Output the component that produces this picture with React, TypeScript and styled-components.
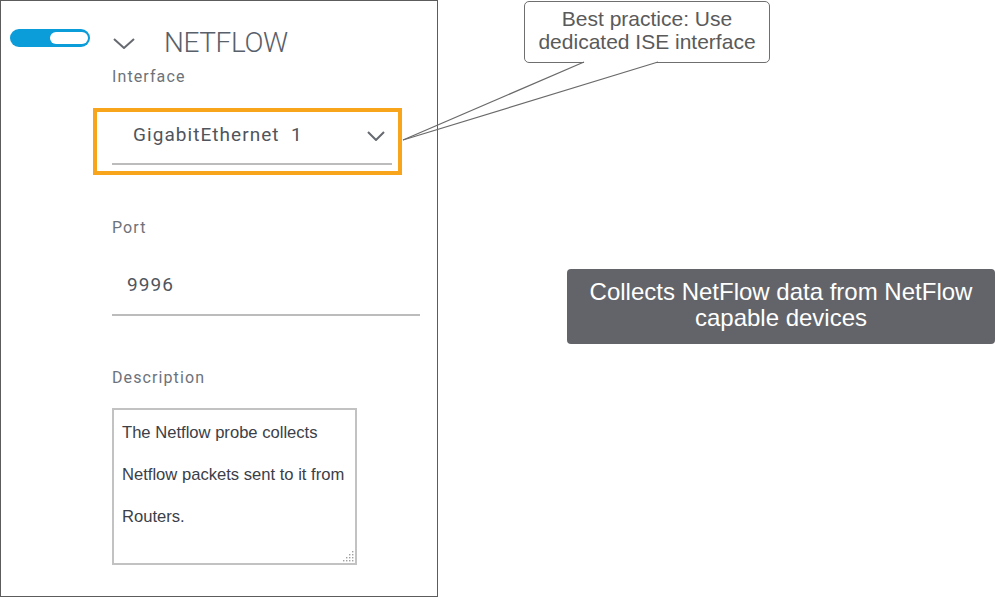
import React from "react";
import styled, { createGlobalStyle } from "styled-components";

const Global = createGlobalStyle`
  html, body { margin: 0; padding: 0; background: #fff; }
  body { font-family: Roboto, "Liberation Sans", Arial, sans-serif; }
`;

const Page = styled.div`
  position: relative;
  width: 995px;
  height: 598px;
  display: flex;
  overflow: hidden;
  background: #fff;
`;

const Panel = styled.section`
  box-sizing: border-box;
  width: 438px;
  height: 597px;
  border: 1px solid #5c5c5c;
  display: flex;
  flex-direction: column;
`;

const Header = styled.div`
  display: flex;
  align-items: flex-start;
  padding: 28px 0 0 9px;
  height: 28px;
`;

const Toggle = styled.div`
  position: relative;
  width: 80px;
  height: 18px;
  border-radius: 9px;
  background: #0b9cda;
  &::after {
    content: "";
    position: absolute;
    left: 40px;
    top: 3px;
    width: 38px;
    height: 12px;
    border-radius: 6px;
    background: #fff;
  }
`;

const HeaderChevron = styled.svg`
  margin: 9px 0 0 23px;
  width: 22px;
  height: 11px;
`;

const Title = styled.h1`
  margin: 0 0 0 29px;
  font-size: 28px;
  line-height: 28px;
  font-weight: 300;
  color: #58606a;
  letter-spacing: -0.4px;
`;

const Form = styled.div`
  display: flex;
  flex-direction: column;
  padding-left: 111px;
`;

const Label = styled.div<{ $top: number }>`
  margin-top: ${(p) => p.$top}px;
  font-size: 16px;
  line-height: 20px;
  color: #6d727a;
  letter-spacing: 1.1px;
`;

const Highlight = styled.div`
  box-sizing: border-box;
  margin: 21px 0 0 -19px;
  width: 309px;
  border: 4px solid #f9a51b;
  padding: 0 6px 6px 15px;
`;

const Select = styled.div`
  display: flex;
  align-items: flex-start;
  justify-content: space-between;
  padding: 11px 7px 16px 21px;
  border-bottom: 2px solid #bcbcbc;
`;

const Value = styled.span`
  font-size: 19px;
  line-height: 24px;
  color: #50555c;
  letter-spacing: 1.05px;
  white-space: pre;
`;

const SelectChevron = styled.svg`
  margin-top: 8px;
  width: 18px;
  height: 10px;
`;

const Input = styled.div`
  margin-top: 35px;
  width: 308px;
  box-sizing: border-box;
  padding: 0 0 17px 15px;
  border-bottom: 2px solid #bcbcbc;
`;

const TextBox = styled.div`
  position: relative;
  box-sizing: border-box;
  margin-top: 20px;
  width: 245px;
  height: 157px;
  border: 2px solid #c2c2c2;
  padding: 2px 8px 0;
  font-family: "Liberation Sans", Arial, sans-serif;
  font-size: 16.6px;
  line-height: 42px;
  color: #3b4048;
`;

const Grip = styled.svg`
  position: absolute;
  right: 1px;
  bottom: 1px;
  width: 12px;
  height: 12px;
`;

const Side = styled.div`
  display: flex;
  flex-direction: column;
  align-items: flex-start;
  font-family: "Liberation Sans", Arial, sans-serif;
`;

const Callout = styled.div`
  box-sizing: border-box;
  margin: 1px 0 0 86px;
  width: 246px;
  height: 62px;
  border: 1px solid #6f6f6f;
  border-radius: 5px;
  padding-top: 5px;
  text-align: center;
  font-size: 21px;
  line-height: 23px;
  color: #5a5a5a;
`;

const Note = styled.div`
  box-sizing: border-box;
  margin: 206px 0 0 129px;
  width: 428px;
  height: 75px;
  border-radius: 4px;
  background: #636469;
  padding-top: 10px;
  text-align: center;
  font-size: 24px;
  line-height: 26px;
  color: #fff;
`;

const Overlay = styled.svg`
  position: absolute;
  left: 0;
  top: 0;
  width: 995px;
  height: 598px;
  pointer-events: none;
`;

const Chevron = ({ w, h }: { w: number; h: number }) => (
  <polyline
    points={`1,1 ${w / 2},${h - 1} ${w - 1},1`}
    fill="none"
    stroke="#666a70"
    strokeWidth={2}
  />
);

const dots: [number, number][] = [];
for (let r = 0; r < 4; r++)
  for (let c = 0; c < 4; c++) if (r + c >= 3) dots.push([c, r]);

export default function App() {
  return (
    <>
      <Global />
      <Page>
        <Panel>
          <Header>
            <Toggle />
            <HeaderChevron viewBox="0 0 22 11">
              <Chevron w={22} h={11} />
            </HeaderChevron>
            <Title>NETFLOW</Title>
          </Header>
          <Form>
            <Label $top={10}>Interface</Label>
            <Highlight>
              <Select>
                <Value>GigabitEthernet  1</Value>
                <SelectChevron viewBox="0 0 18 10">
                  <Chevron w={18} h={10} />
                </SelectChevron>
              </Select>
            </Highlight>
            <Label $top={43}>Port</Label>
            <Input>
              <Value>9996</Value>
            </Input>
            <Label $top={52}>Description</Label>
            <TextBox>
              The Netflow probe collects Netflow packets sent to it from Routers.
              <Grip viewBox="0 0 12 12">
                {dots.map(([c, r]) => (
                  <rect
                    key={`${c}-${r}`}
                    x={1 + c * 3}
                    y={1 + r * 3}
                    width={1.4}
                    height={1.4}
                    fill="#a0a0a0"
                  />
                ))}
              </Grip>
            </TextBox>
          </Form>
        </Panel>
        <Side>
          <Callout>
            Best practice: Use
            <br />
            dedicated ISE interface
          </Callout>
          <Note>
            Collects NetFlow data from NetFlow
            <br />
            capable devices
          </Note>
        </Side>
        <Overlay viewBox="0 0 995 598">
          <rect x={584} y={61} width={73} height={3} fill="#fff" />
          <line x1={584} y1={62} x2={403} y2={140} stroke="#6a6a6a" strokeWidth={1.2} />
          <line x1={658} y1={62} x2={403} y2={140} stroke="#6a6a6a" strokeWidth={1.2} />
        </Overlay>
      </Page>
    </>
  );
}
